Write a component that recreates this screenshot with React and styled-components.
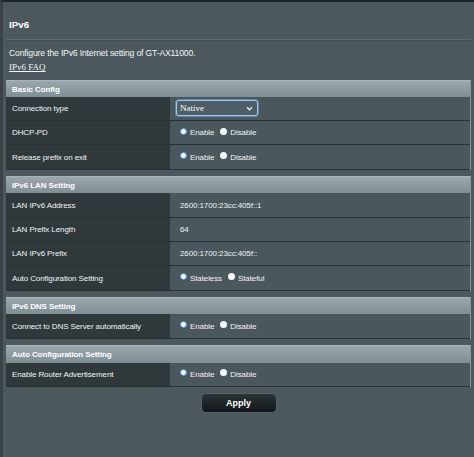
import React from "react";
import styled, { createGlobalStyle } from "styled-components";

const GlobalStyle = createGlobalStyle`
  html, body {
    margin: 0;
    padding: 0;
    background: #4c585d;
  }
  body {
    font-family: "Liberation Sans", Arial, sans-serif;
  }
`;

const sections = [
  {
    title: "Basic Config",
    rows: [
      { label: "Connection type", type: "select", value: "Native" },
      { label: "DHCP-PD", type: "radio", options: ["Enable", "Disable"] },
      { label: "Release prefix on exit", type: "radio", options: ["Enable", "Disable"] },
    ],
  },
  {
    title: "IPv6 LAN Setting",
    rows: [
      { label: "LAN IPv6 Address", type: "text", value: "2600:1700:23cc:405f::1" },
      { label: "LAN Prefix Length", type: "text", value: "64" },
      { label: "LAN IPv6 Prefix", type: "text", value: "2600:1700:23cc:405f::" },
      { label: "Auto Configuration Setting", type: "radio", options: ["Stateless", "Stateful"] },
    ],
  },
  {
    title: "IPv6 DNS Setting",
    rows: [
      { label: "Connect to DNS Server automatically", type: "radio", options: ["Enable", "Disable"] },
    ],
  },
  {
    title: "Auto Configuration Setting",
    rows: [
      { label: "Enable Router Advertisement", type: "radio", options: ["Enable", "Disable"] },
    ],
  },
];

const Field = ({ row }) => {
  if (row.type === "select") {
    return (
      <Select>
        <span>{row.value}</span>
        <svg width="7" height="5" viewBox="0 0 8 6">
          <path d="M1 1.5 L4 4.5 L7 1.5" stroke="#e6eef2" strokeWidth="1.6" fill="none" />
        </svg>
      </Select>
    );
  }
  if (row.type === "radio") {
    return (
      <RadioGroup>
        {row.options.map((opt, i) => (
          <RadioLabel key={opt}>
            <Radio $checked={i === 0} />
            {opt}
          </RadioLabel>
        ))}
      </RadioGroup>
    );
  }
  return <span>{row.value}</span>;
};

const App = () => {
  return (
    <>
      <GlobalStyle />
      <Page>
        <Intro>
          <Title>IPv6</Title>
        </Intro>
        <Divider />
        <Intro>
          <Desc>Configure the IPv6 Internet setting of GT-AX11000.</Desc>
          <FaqLink href="#">IPv6 FAQ</FaqLink>
        </Intro>
        {sections.map((section) => (
          <Section key={section.title}>
            <SectionHeader>{section.title}</SectionHeader>
            {section.rows.map((row) => (
              <Row key={row.label}>
                <Label>{row.label}</Label>
                <Value>
                  <Field row={row} />
                </Value>
              </Row>
            ))}
          </Section>
        ))}
        <ButtonBar>
          <ApplyButton type="button">Apply</ApplyButton>
        </ButtonBar>
      </Page>
    </>
  );
};

export default App;

const Page = styled.div`
  min-height: 457px;
  box-sizing: border-box;
  border-top: 2px solid #1e2528;
  border-left: 3px solid #3a4448;
  padding: 0 3px;
  background: #4c585d;
  color: #eef2f3;
`;

const Intro = styled.div`
  padding-left: 3px;
`;

const Title = styled.div`
  padding-top: 17px;
  font-size: 9.8px;
  font-weight: bold;
  line-height: 12px;
  color: #ffffff;
`;

const Divider = styled.div`
  margin-top: 8px;
  height: 1px;
  background: #5e6a6e;
  border-bottom: 1px solid #434e52;
`;

const Desc = styled.div`
  margin-top: 6px;
  font-size: 8.6px;
  letter-spacing: -0.15px;
  line-height: 12px;
  color: #f2f5f6;
`;

const FaqLink = styled.a`
  display: block;
  width: fit-content;
  margin-top: 2px;
  font-family: "Liberation Serif", "Times New Roman", serif;
  font-size: 9px;
  line-height: 12px;
  color: #f2f5f6;
  text-decoration: underline;
`;

const Section = styled.div`
  margin-top: 6.5px;
  background: #4a585d;
  border-right: 1px solid #8a989d;

  &:first-of-type {
    margin-top: 8px;
  }
`;

const SectionHeader = styled.div`
  height: 17.3px;
  line-height: 17px;
  padding-left: 6px;
  font-size: 8px;
  font-weight: bold;
  letter-spacing: -0.1px;
  color: #ffffff;
  background: linear-gradient(#9aa8ad, #7f8e94);
  border-top: 1px solid #a7b4b8;
  box-sizing: border-box;
`;

const Row = styled.div`
  display: grid;
  grid-template-columns: 164px 1fr;
  height: 23.3px;
  border-bottom: 1px solid #283134;
  font-size: 8px;
  letter-spacing: -0.1px;
`;

const Label = styled.div`
  display: flex;
  align-items: center;
  padding-left: 6px;
  background: #2f393c;
  color: #f0f3f4;
`;

const Value = styled.div`
  display: flex;
  align-items: center;
  padding-left: 10px;
  background: #4a585d;
  color: #f0f3f4;
`;

const Select = styled.div`
  display: flex;
  align-items: center;
  justify-content: space-between;
  box-sizing: border-box;
  width: 82px;
  height: 16px;
  margin-left: -4px;
  padding: 0 4px 0 3px;
  border: 1px solid #a6c8e6;
  border-radius: 3px;
  background: #4d5e65;
  box-shadow: 0 0 0 1px #5c87ad;
  font-family: "Liberation Serif", "Times New Roman", serif;
  font-size: 9px;
  letter-spacing: 0;
  color: #ffffff;
`;

const RadioGroup = styled.div`
  display: flex;
  align-items: center;
  gap: 6px;
`;

const RadioLabel = styled.label`
  display: flex;
  align-items: center;
  gap: 3px;
`;

const Radio = styled.span`
  display: inline-block;
  box-sizing: border-box;
  width: 7px;
  height: 7px;
  margin-top: -3px;
  border-radius: 50%;
  background: #f6f8fa;
  border: ${(p) => (p.$checked ? "1.6px solid #3f8fe6" : "none")};
`;

const ButtonBar = styled.div`
  display: flex;
  justify-content: center;
  padding-top: 6px;
`;

const ApplyButton = styled.button`
  width: 76px;
  height: 20px;
  border: 1px solid #55636a;
  border-radius: 5px;
  background: linear-gradient(#2b3438, #10161a);
  color: #ffffff;
  font-family: "Liberation Sans", Arial, sans-serif;
  font-size: 9px;
  font-weight: bold;
  cursor: pointer;
`;
